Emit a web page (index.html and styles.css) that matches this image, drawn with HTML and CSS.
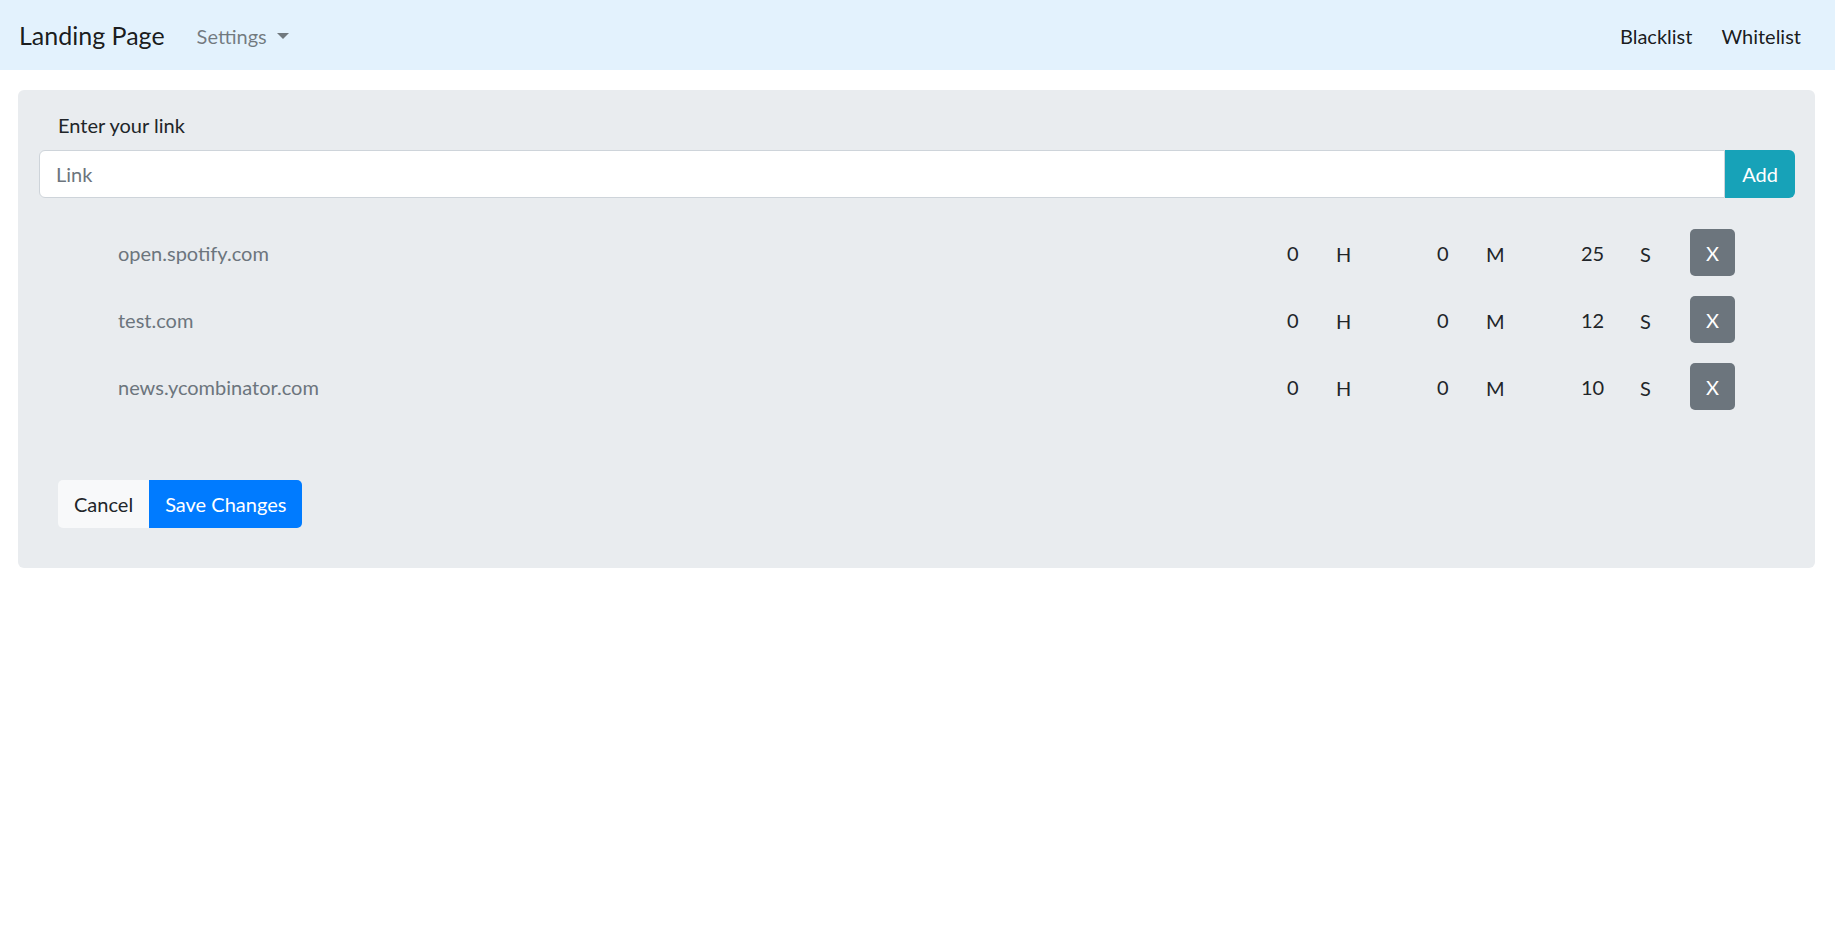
FILE: index.html
```html
<!DOCTYPE html>
<html lang="en">
<head>
    <meta charset="UTF-8">
    <meta name="viewport" content="width=device-width, initial-scale=1.0">
    <title>Landing Page</title>
    <link rel="stylesheet" href="styles.css">
</head>
<body>

<nav class="navbar">
    <div class="nav-left">
        <a href="#" class="brand">Landing Page</a>
        <a href="#" class="nav-link muted dropdown-toggle">Settings</a>
    </div>
    <div class="nav-right">
        <a href="#" class="nav-link">Blacklist</a>
        <a href="#" class="nav-link">Whitelist</a>
    </div>
</nav>

<main class="panel">
    <label for="link" class="panel-label">Enter your link</label>
    <div class="input-group">
        <input type="text" id="link" class="form-control" placeholder="Link">
        <button class="btn btn-info">Add</button>
    </div>

    <div class="sites">
        <div class="site">
            <span class="site-name">open.spotify.com</span>
            <span class="num">0</span><span class="unit">H</span>
            <span class="num">0</span><span class="unit">M</span>
            <span class="num">25</span><span class="unit">S</span>
            <button class="btn btn-secondary">X</button>
        </div>
        <div class="site">
            <span class="site-name">test.com</span>
            <span class="num">0</span><span class="unit">H</span>
            <span class="num">0</span><span class="unit">M</span>
            <span class="num">12</span><span class="unit">S</span>
            <button class="btn btn-secondary">X</button>
        </div>
        <div class="site">
            <span class="site-name">news.ycombinator.com</span>
            <span class="num">0</span><span class="unit">H</span>
            <span class="num">0</span><span class="unit">M</span>
            <span class="num">10</span><span class="unit">S</span>
            <button class="btn btn-secondary">X</button>
        </div>
    </div>

    <div class="btn-group">
        <button class="btn btn-light">Cancel</button>
        <button class="btn btn-primary">Save Changes</button>
    </div>
</main>

</body>
</html>
```

FILE: styles.css
```css
body {
    font-family: Lato, "Noto Sans", sans-serif;
    font-size: 20px;
    line-height: 1.5;
    margin: 0;
    color: #212529;
    background-color: #fff;
}
a {
    text-decoration: none;
}
.navbar {
    background-color: #e3f2fd;
    height: 70px;
    display: flex;
    align-items: center;
    justify-content: space-between;
    padding: 0 19px;
}
.nav-left, .nav-right {
    display: flex;
    align-items: center;
}
.brand {
    font-size: 25px;
    color: rgba(0,0,0,0.9);
    margin-right: 22px;
    padding: 8px 0 6px;
}
.nav-link {
    color: rgba(0,0,0,0.9);
    padding: 10px 10px 8px;
}
.nav-link.muted {
    color: rgba(0,0,0,0.5);
}
.nav-right .nav-link:last-child {
    padding-right: 0;
    margin-right: 15px;
}
.nav-right .nav-link + .nav-link {
    margin-left: 9px;
}
.dropdown-toggle::after {
    content: "";
    display: inline-block;
    margin-left: 0.5em;
    vertical-align: 0.255em;
    border-top: 0.3em solid;
    border-right: 0.3em solid transparent;
    border-left: 0.3em solid transparent;
}
.panel {
    background-color: #e9ecef;
    border-radius: 6px;
    margin: 20px 20px 0 18px;
    padding: 20px 20px 40px 21px;
}
.panel-label {
    display: block;
    padding-left: 19px;
    margin-bottom: 10px;
}
.input-group {
    display: flex;
}
.form-control {
    flex: 1;
    height: 48px;
    box-sizing: border-box;
    font: inherit;
    color: #495057;
    padding: 0 16px;
    border: 1px solid #ced4da;
    border-radius: 6px 0 0 6px;
    background-color: #fff;
}
.form-control::placeholder {
    color: #6c757d;
}
.btn {
    font: inherit;
    border: 1px solid transparent;
    border-radius: 5px;
    padding: 0 15px;
    height: 48px;
    cursor: pointer;
}
.btn-info {
    background-color: #17a2b8;
    color: #fff;
    border-radius: 0 6px 6px 0;
    width: 70px;
}
.btn-secondary {
    background-color: #6c757d;
    color: #fff;
    width: 45px;
    height: 47px;
    padding: 0;
}
.btn-light {
    background-color: #f8f9fa;
    color: #212529;
    border-radius: 5px 0 0 5px;
}
.btn-primary {
    background-color: #007bff;
    color: #fff;
    border-radius: 0 5px 5px 0;
}
.sites {
    margin: 31px 0 70px;
    display: flex;
    flex-direction: column;
    gap: 20px;
}
.site {
    display: grid;
    grid-template-columns: 1fr 49px 101px 49px 95px 59px 50px 45px;
    align-items: center;
    padding: 0 60px 0 79px;
}
.site-name {
    color: #6c757d;
}
.unit {
    padding-top: 3px;
}
.btn-group {
    display: flex;
    padding-left: 19px;
}
```
